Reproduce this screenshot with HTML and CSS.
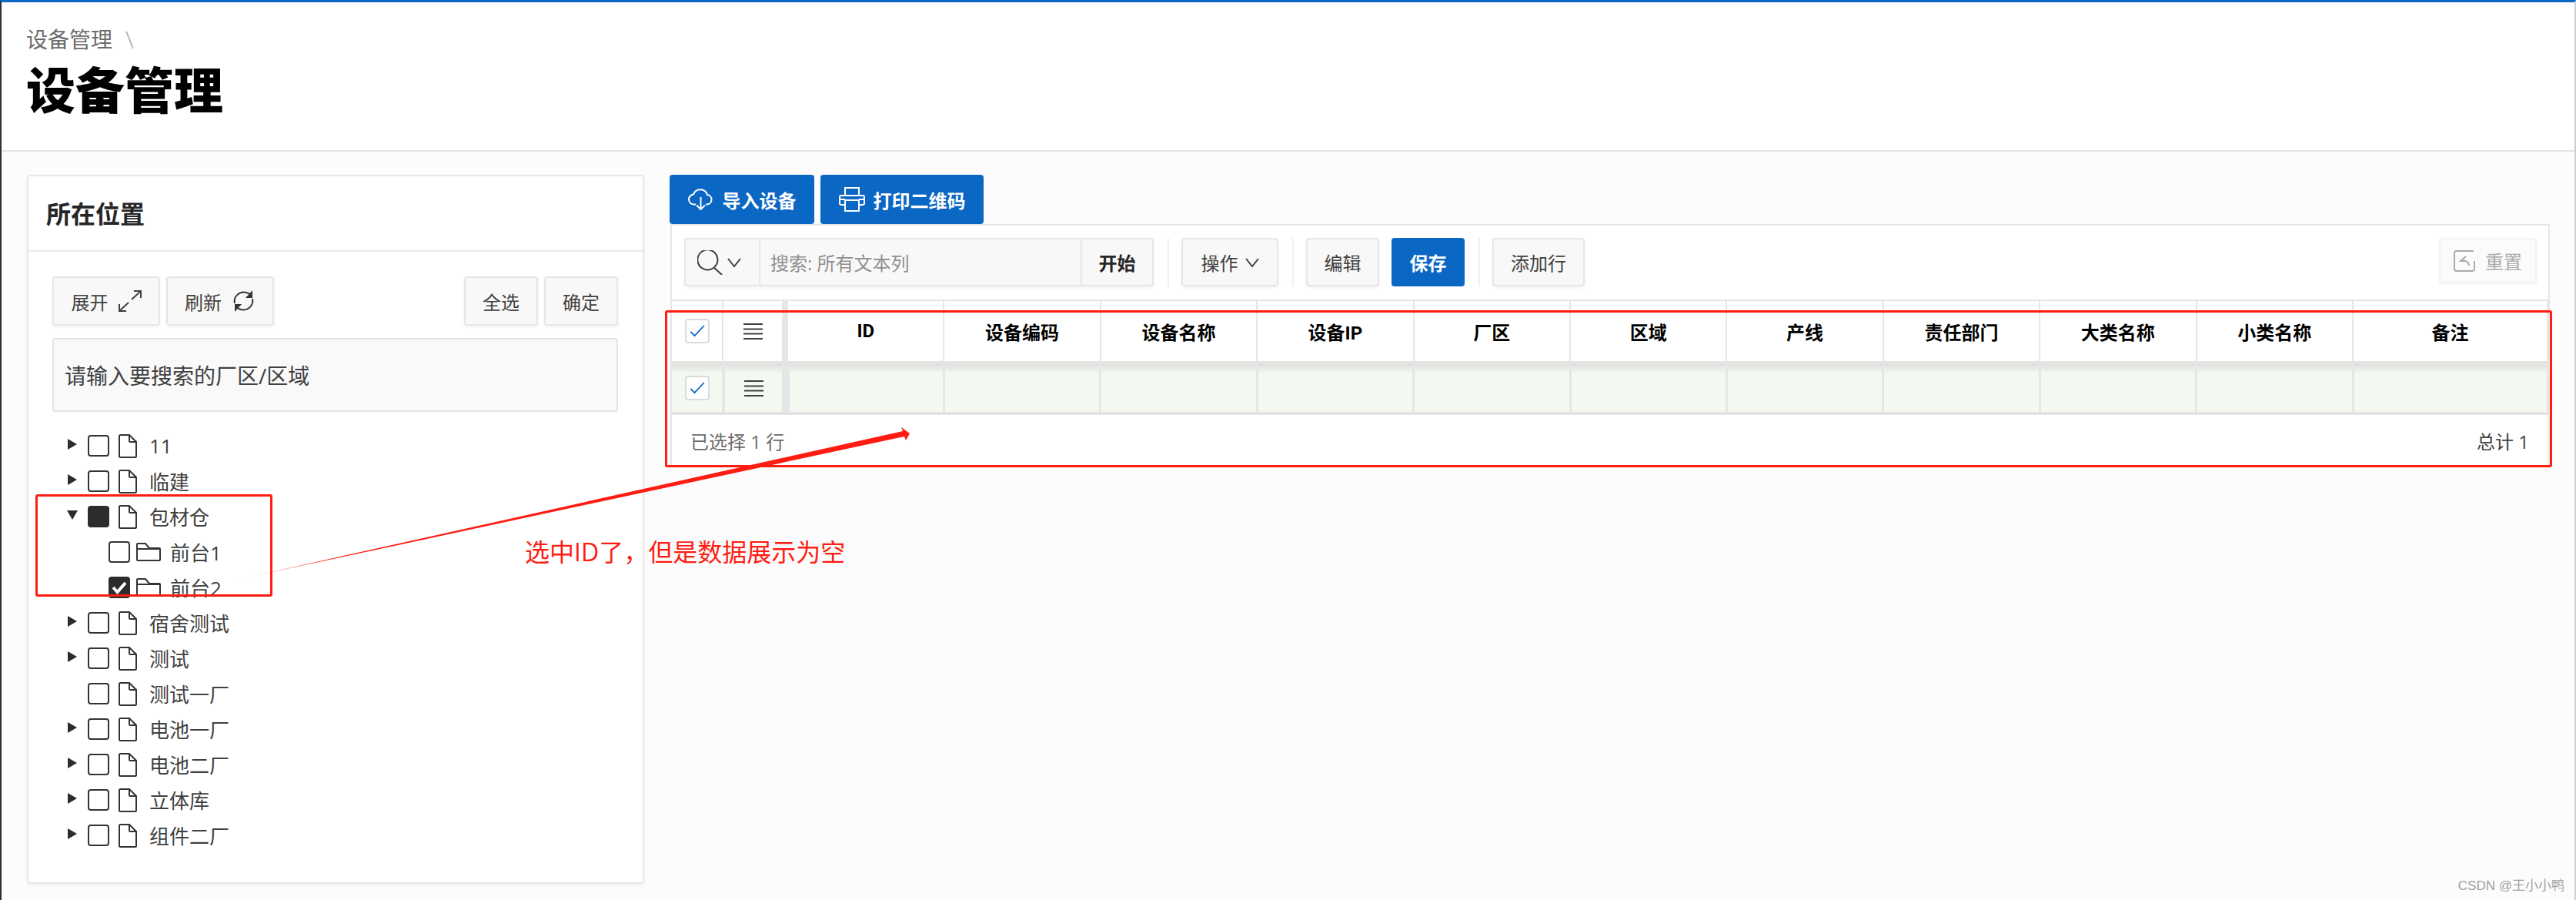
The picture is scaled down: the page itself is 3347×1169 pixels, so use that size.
FILE: index.html
```html
<!DOCTYPE html>
<html lang="zh-CN">
<head>
<meta charset="utf-8">
<title>设备管理</title>
<link rel="stylesheet" href="styles.css">
</head>
<body>
<svg class="defs" width="0" height="0" aria-hidden="true">
  <symbol id="file" viewBox="0 0 24 31"><path d="M2.5 1h11.5l9 9v18.5a1.500 1.500 0 0 1-1.500 1.500H2.500A1.500 1.500 0 0 1 1 28.500V2.500A1.500 1.500 0 0 1 2.500 1zM14 1.500V8.500a1.500 1.500 0 0 0 1.500 1.500H22.500" fill="none" stroke="#333" stroke-width="2"/></symbol>
  <symbol id="folder" viewBox="0 0 32 24"><path d="M1 22V2a1 1 0 0 1 1-1h10l5 6h13a1 1 0 0 1 1 1v14a1 1 0 0 1-1 1H2a1 1 0 0 1-1-1zM1 8h30" fill="none" stroke="#333" stroke-width="2"/></symbol>
  <symbol id="tri-r" viewBox="0 0 12 14"><path d="M0 0l12 7-12 7z" fill="#2c2c2c"/></symbol>
  <symbol id="tri-d" viewBox="0 0 14 12"><path d="M0 0h14l-7 12z" fill="#2c2c2c"/></symbol>
  <symbol id="tick" viewBox="0 0 32 32"><path d="M6 17l6 6L26 8" fill="none" stroke="#0a67c4" stroke-width="2"/></symbol>
  <symbol id="lines" viewBox="0 0 25 21"><path d="M0 1h25M0 7.500h25M0 13.500h25M0 20h25" fill="none" stroke="#404040" stroke-width="2"/></symbol>
  <symbol id="chev" viewBox="0 0 18 12"><path d="M1 1l8 10 8-10" fill="none" stroke="#404040" stroke-width="2"/></symbol>
</svg>
<div class="app">
  <header class="page-head">
    <div class="crumb"><span>设备管理</span><span class="crumb-sep">\</span></div>
    <h1 class="page-title">设备管理</h1>
  </header>
  <div class="content">
    <aside class="panel">
      <h2 class="panel-title">所在位置</h2>
      <div class="panel-body">
        <div class="tree-tools">
          <button class="btn btn-wide">展开
            <svg class="ico-28" viewBox="0 0 30 28"><path d="M17 12L29 1M20 1h9v9M13 16L1 27M1 18v9h9" fill="none" stroke="#404040" stroke-width="2"/></svg>
          </button>
          <button class="btn btn-wide">刷新
            <svg class="ico-31" viewBox="0 0 31 28"><path d="M4 17C2 8 10 1 19 3c2 .5 4 1.500 5 3M27 11c2 9-6 16-15 14-2-.5-4-1.500-5-3" fill="none" stroke="#333" stroke-width="2"/><path d="M27 0v10h-9zM4 28V18h9z" fill="#333"/></svg>
          </button>
          <button class="btn btn-small push">全选</button>
          <button class="btn btn-small">确定</button>
        </div>
        <div class="tree-search">请输入要搜索的厂区/区域</div>
        <ul class="tree">
          <li class="node"><svg class="tw"><use href="#tri-r"/></svg><span class="cb"></span><svg class="file"><use href="#file"/></svg>11</li>
          <li class="node"><svg class="tw"><use href="#tri-r"/></svg><span class="cb"></span><svg class="file"><use href="#file"/></svg>临建</li>
          <li class="node"><svg class="tw tw-d"><use href="#tri-d"/></svg><span class="cb cb-on"></span><svg class="file"><use href="#file"/></svg>包材仓</li>
          <li class="node child"><span class="cb"></span><svg class="folder"><use href="#folder"/></svg>前台1</li>
          <li class="node child"><span class="cb cb-on"><svg viewBox="0 0 28 28"><path d="M6 14l5.500 6L22 8" fill="none" stroke="#fff" stroke-width="4"/></svg></span><svg class="folder"><use href="#folder"/></svg>前台2</li>
          <li class="node"><svg class="tw"><use href="#tri-r"/></svg><span class="cb"></span><svg class="file"><use href="#file"/></svg>宿舍测试</li>
          <li class="node"><svg class="tw"><use href="#tri-r"/></svg><span class="cb"></span><svg class="file"><use href="#file"/></svg>测试</li>
          <li class="node"><svg class="tw tw-none"></svg><span class="cb"></span><svg class="file"><use href="#file"/></svg>测试一厂</li>
          <li class="node"><svg class="tw"><use href="#tri-r"/></svg><span class="cb"></span><svg class="file"><use href="#file"/></svg>电池一厂</li>
          <li class="node"><svg class="tw"><use href="#tri-r"/></svg><span class="cb"></span><svg class="file"><use href="#file"/></svg>电池二厂</li>
          <li class="node"><svg class="tw"><use href="#tri-r"/></svg><span class="cb"></span><svg class="file"><use href="#file"/></svg>立体库</li>
          <li class="node"><svg class="tw"><use href="#tri-r"/></svg><span class="cb"></span><svg class="file"><use href="#file"/></svg>组件二厂</li>
        </ul>
      </div>
    </aside>
    <main class="work">
      <div class="actions">
        <button class="btn-primary btn-import">
          <svg class="ico-cloud" viewBox="0 0 33 28"><path d="M10 20.500H8a6.500 6.500 0 0 1-1-13A9.500 9.500 0 0 1 25 8a6.300 6.300 0 0 1 0 12.500h-2M16.500 11v16M11 21.500l5.500 5.500 5.500-5.500" fill="none" stroke="#fff" stroke-width="2"/></svg>
          导入设备
        </button>
        <button class="btn-primary btn-print">
          <svg class="ico-print" viewBox="0 0 34 32"><path d="M8 11V1h18v10M8 23H3a2 2 0 0 1-2-2V13a2 2 0 0 1 2-2h28a2 2 0 0 1 2 2v8a2 2 0 0 1-2 2h-5M8 17h18v14H8zM1 16h7M26 16h7" fill="none" stroke="#fff" stroke-width="2"/></svg>
          打印二维码
        </button>
      </div>
      <section class="report">
        <div class="toolbar">
          <div class="search-group">
            <span class="search-icon">
              <svg class="ico-search" viewBox="0 0 33 32"><path d="M21 23a13 13 0 1 1 1-.800M21 22l11 10" fill="none" stroke="#404040" stroke-width="2"/></svg>
              <svg class="chev"><use href="#chev"/></svg>
            </span>
            <span class="search-input">搜索: 所有文本列</span>
            <span class="search-go">开始</span>
          </div>
          <span class="divider"></span>
          <button class="btn btn-action">操作<svg class="chev"><use href="#chev"/></svg></button>
          <span class="divider"></span>
          <button class="btn btn-edit">编辑</button>
          <button class="btn-primary btn-save">保存</button>
          <span class="divider"></span>
          <button class="btn btn-add">添加行</button>
          <button class="btn-reset">
            <svg class="ico-reset" viewBox="0 0 28 28"><path d="M27 14v10a3 3 0 0 1-3 3H4a3 3 0 0 1-3-3V4a3 3 0 0 1 3-3h22M16 8l-7 6 7 0M9 14c4-1 11 0 11 6" fill="none" stroke="#aaa" stroke-width="2"/></svg>
            重置
          </button>
        </div>
        <div class="grid grid-head">
          <div class="c c-sel"><span class="tick-box"><svg><use href="#tick"/></svg></span></div>
          <div class="c c-menu"><svg class="lines"><use href="#lines"/></svg></div>
          <div class="c">ID</div>
          <div class="c">设备编码</div>
          <div class="c">设备名称</div>
          <div class="c">设备IP</div>
          <div class="c">厂区</div>
          <div class="c">区域</div>
          <div class="c">产线</div>
          <div class="c">责任部门</div>
          <div class="c">大类名称</div>
          <div class="c">小类名称</div>
          <div class="c">备注</div>
        </div>
        <div class="grid grid-row">
          <div class="c c-sel"><span class="tick-box"><svg><use href="#tick"/></svg></span></div>
          <div class="c c-menu"><svg class="lines"><use href="#lines"/></svg></div>
          <div class="c"></div><div class="c"></div><div class="c"></div><div class="c"></div><div class="c"></div>
          <div class="c"></div><div class="c"></div><div class="c"></div><div class="c"></div><div class="c"></div><div class="c"></div>
        </div>
        <div class="report-foot">
          <span class="selected">已选择 1 行</span>
          <span class="total">总计 1</span>
        </div>
      </section>
    </main>
  </div>
</div>
<div class="note-box note-tree"></div>
<div class="note-box note-table"></div>
<svg class="note-arrow" width="3347" height="1169" aria-hidden="true">
  <defs><linearGradient id="fade" gradientUnits="userSpaceOnUse" x1="307" y1="753" x2="440" y2="724"><stop offset="0" stop-color="#ff1c12" stop-opacity=".12"/><stop offset="1" stop-color="#ff1c12"/></linearGradient></defs>
  <path d="M307 753L1173 560L1171 555L1182 563L1177 572L1175 567Z" fill="url(#fade)"/>
</svg>
<div class="note-text">选中ID了，但是数据展示为空</div>
<div class="watermark">CSDN @王小小鸭</div>
</body>
</html>
```

FILE: styles.css
```css
* { box-sizing: border-box; }
html, body { margin: 0; padding: 0; }
body {
  position: relative;
  width: 3347px;
  height: 1169px;
  overflow: hidden;
  background: #fcfcfc;
  color: #404040;
  font-family: "Open Sans", "Noto Sans CJK SC", sans-serif;
  font-size: 24px;
}
.defs { position: absolute; }
button { font: inherit; cursor: pointer; }
ul { list-style: none; margin: 0; padding: 0; }

.app {
  height: 1169px;
  border-top: 3px solid #0a67c4;
  border-left: 2px solid #2c2f33;
  border-right: 2px solid #c3d3d6;
}

.page-head {
  height: 194px;
  padding: 30px 0 0 32px;
  background: #fff;
  border-bottom: 2px solid #e4e4e4;
}
.crumb { display: flex; gap: 17px; font-size: 28px; line-height: 36px; color: #6b6b6b; }
.crumb-sep { color: #a8a8a8; font-size: 32px; font-weight: 300; }
.page-title { margin: 8px 0 0; font-size: 64px; line-height: 80px; font-weight: 900; color: #000; }

.content { display: flex; padding: 30px 0 0 33px; gap: 33px; }

.panel {
  width: 802px;
  height: 921px;
  background: #fff;
  border: 2px solid #e8e8e8;
  border-radius: 4px;
  box-shadow: 0 2px 4px rgba(0,0,0,.06);
}
.panel-title {
  margin: 0;
  height: 98px;
  padding-left: 23px;
  border-bottom: 2px solid #ebebeb;
  font-size: 32px;
  line-height: 98px;
  font-weight: 700;
  color: #262626;
}
.panel-body { padding: 32px 32px 0 31px; }

.btn {
  display: inline-flex;
  align-items: center;
  justify-content: center;
  height: 64px;
  padding: 0;
  background: #f8f8f8;
  border: 2px solid #e6e6e6;
  border-radius: 4px;
  color: #404040;
  box-shadow: 0 2px 4px rgba(0,0,0,.05);
}
.tree-tools { display: flex; gap: 8px; }
.btn-wide { width: 140px; gap: 13px; }
.btn-small { width: 96px; }
.push { margin-left: auto; }
.ico-28 { width: 30px; height: 28px; }
.ico-31 { width: 31px; height: 28px; }

.tree-search {
  display: flex;
  align-items: center;
  height: 96px;
  margin-top: 16px;
  padding-left: 14px;
  background: #f9f9f9;
  border: 2px solid #e4e4e4;
  border-radius: 4px;
  font-size: 28px;
}

.tree { margin-top: 21px; }
.node {
  display: flex;
  align-items: center;
  height: 46px;
  padding-left: 20px;
  font-size: 26px;
  color: #404040;
}
.tw { width: 12px; height: 14px; margin: 0 14px 5px 0; flex: none; }
.tw-d { width: 14px; height: 12px; margin: 0 13px 5px -1px; }
.cb {
  flex: none;
  width: 28px;
  height: 28px;
  background: #fff;
  border: 2px solid #333;
  border-radius: 4px;
}
.cb svg { display: block; width: 28px; height: 28px; margin: -2px; }
.cb-on { background: #2c2c2c; border-color: #2c2c2c; }
.file { flex: none; width: 24px; height: 31px; margin: 0 16px 0 12px; }
.child { padding-left: 73px; }
.folder { flex: none; width: 32px; height: 24px; margin: 0 12px 0 8px; }

.work { width: 2445px; }
.actions { display: flex; gap: 8px; height: 64px; }
.btn-primary {
  display: inline-flex;
  align-items: center;
  justify-content: center;
  border: 0;
  border-radius: 4px;
  background: #0a67c4;
  color: #fff;
  font-weight: 700;
  padding: 0;
}
.btn-import { width: 188px; gap: 12px; }
.btn-print { width: 212px; gap: 11px; }
.ico-cloud { width: 33px; height: 28px; }
.ico-print { width: 34px; height: 32px; }

.report {
  margin-left: 1px;
  width: 2442px;
  background: #fff;
  border: 2px solid #e6e6e6;
  border-bottom: 0;
}
.toolbar {
  display: flex;
  gap: 16px;
  height: 98px;
  padding: 16px 15px 17px 16px;
  border-bottom: 2px solid #e6e6e6;
}
.search-group {
  display: flex;
  width: 610px;
  height: 63px;
  background: #f8f8f8;
  border: 2px solid #e6e6e6;
  border-radius: 4px;
  box-shadow: 0 2px 4px rgba(0,0,0,.05);
}
.search-icon {
  display: flex;
  align-items: center;
  gap: 6px;
  width: 97px;
  padding-left: 15px;
  border-right: 2px solid #e6e6e6;
}
.ico-search { width: 33px; height: 32px; }
.chev { flex: none; width: 18px; height: 12px; }
.search-input {
  flex: 1;
  display: flex;
  align-items: center;
  padding-left: 13px;
  color: #8f8f8f;
}
.search-go {
  display: flex;
  align-items: center;
  justify-content: center;
  width: 93px;
  border-left: 2px solid #e6e6e6;
  font-weight: 700;
  color: #262626;
}
.divider { flex: none; width: 2px; height: 63px; margin-left: 2px; background: #f0f0f0; }
.btn-action { width: 126px; height: 63px; gap: 9px; }
.btn-edit { width: 95px; height: 63px; }
.btn-save { width: 95px; height: 63px; }
.btn-add { width: 120px; height: 63px; }
.btn-reset {
  display: inline-flex;
  align-items: center;
  justify-content: center;
  gap: 13px;
  width: 127px;
  height: 59px;
  margin-left: auto;
  padding: 0;
  background: #fbfbfb;
  border: 2px solid #f2f2f2;
  border-radius: 4px;
  color: #aaa;
  box-shadow: 0 2px 3px rgba(0,0,0,.03);
}
.ico-reset { width: 28px; height: 28px; }

.grid { display: grid; }
.grid-head {
  grid-template-columns: 67px 84px repeat(10, 203.4px) 253px;
  height: 82px;
  border-bottom: 4px solid #e4e4e4;
  font-family: "Roboto", "Noto Sans CJK SC", sans-serif;
}
.grid-head .c {
  display: flex;
  align-items: center;
  justify-content: center;
  border-right: 2px solid #e6e6e6;
  font-weight: 700;
  color: #000;
}
.grid-head .c-menu { border-right-width: 8px; }
.grid-row {
  grid-template-columns: 69px 84px 202px repeat(9, 203.4px) 253px;
  height: 66px;
  border-bottom: 4px solid #e4e4e4;
  background: linear-gradient(#dde1db, #f3f8f1 12px);
}
.grid-row .c {
  display: flex;
  align-items: center;
  justify-content: center;
  border-right: 3px solid #e6e6e6;
}
.grid-row .c-sel { border-right-width: 4px; }
.grid-row .c-menu { border-right-width: 10px; }
.tick-box {
  display: block;
  width: 32px;
  height: 32px;
  background: #fff;
  border: 2px solid #dcdcdc;
  border-radius: 4px;
}
.tick-box svg { display: block; width: 28px; height: 28px; }
.lines { width: 25px; height: 21px; }

.report-foot {
  display: flex;
  align-items: center;
  justify-content: space-between;
  height: 66px;
  padding: 0 25px 0 24px;
}
.selected { color: #6b6b6b; }
.total { color: #404040; }

.note-box {
  position: absolute;
  border: 3px solid #ff1c12;
  border-radius: 3px;
}
.note-tree { left: 46px; top: 642px; width: 308px; height: 133px; }
.note-table { left: 864px; top: 403px; width: 2452px; height: 204px; }
.note-arrow { position: absolute; left: 0; top: 0; pointer-events: none; }
.note-text {
  position: absolute;
  left: 682px;
  top: 695px;
  font-size: 32px;
  line-height: 44px;
  color: #ff1c12;
}
.watermark {
  position: absolute;
  right: 15px;
  top: 1140px;
  font-family: "Liberation Sans", "Noto Sans CJK SC", sans-serif;
  font-size: 17px;
  line-height: 22px;
  color: #a0a0a0;
}
```
